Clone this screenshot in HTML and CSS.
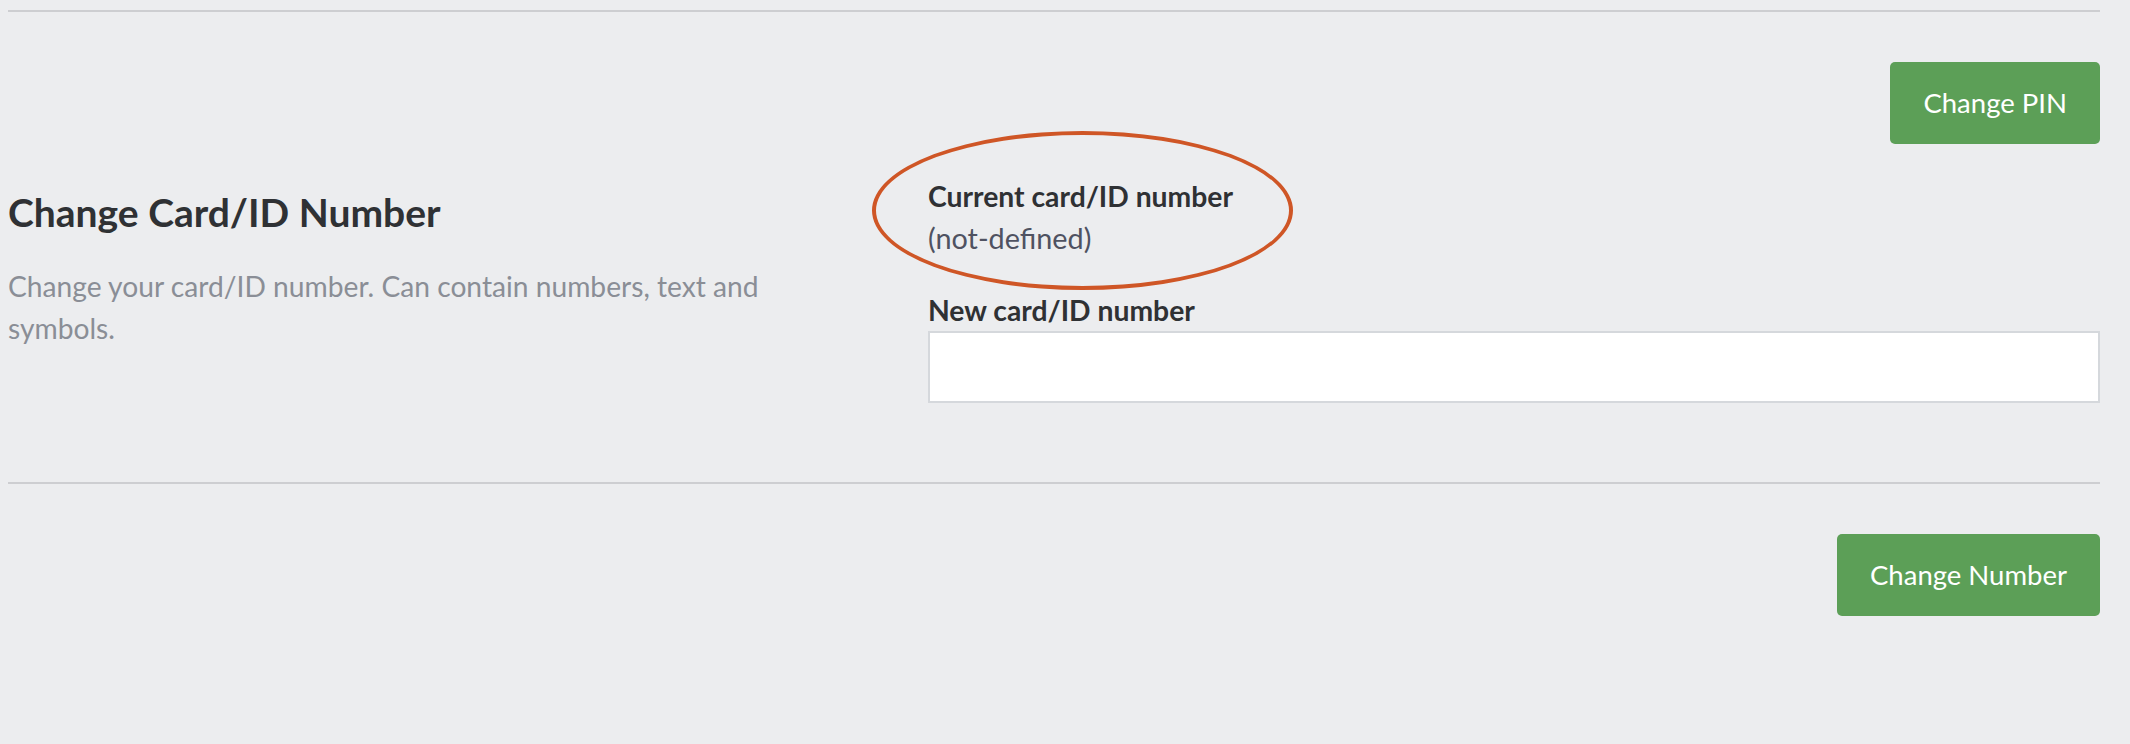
FILE: index.html
```html
<!DOCTYPE html>
<html lang="en">
<head>
<meta charset="utf-8">
<title>Change Card/ID Number</title>
<link rel="stylesheet" href="styles.css">
</head>
<body>
<div class="page">
  <section class="section">
    <div class="actions">
      <button class="btn" type="button">Change PIN</button>
    </div>
    <div class="form-row">
      <div class="intro">
        <h2 class="title">Change Card/ID Number</h2>
        <p class="desc">Change your card/ID number. Can contain numbers, text and symbols.</p>
      </div>
      <div class="fields">
        <div class="current">
          <div class="label">Current card/ID number</div>
          <div class="value">(not-defined)</div>
          <div class="annotation"></div>
        </div>
        <label class="label" for="newnum">New card/ID number</label>
        <input class="input" id="newnum" type="text">
      </div>
    </div>
  </section>
  <section class="section footer">
    <div class="actions">
      <button class="btn" type="button">Change Number</button>
    </div>
  </section>
</div>
</body>
</html>
```

FILE: styles.css
```css
html, body {
  margin: 0;
  padding: 0;
  background: #ecedef;
}
body {
  font-family: Lato, "Open Sans", sans-serif;
  color: #2f3134;
}
.page {
  padding: 10px 30px 0 8px;
  height: 744px;
  box-sizing: border-box;
}
.section {
  border-top: 2px solid #cdced1;
}
.actions {
  display: flex;
  justify-content: flex-end;
  padding-top: 50px;
}
.btn {
  font-family: Lato, "Open Sans", sans-serif;
  font-size: 27.5px;
  line-height: 41px;
  color: #ffffff;
  background: #5c9f57;
  border: none;
  border-radius: 5px;
  padding: 20px 33px 21px;
  cursor: pointer;
}
.form-row {
  display: flex;
  align-items: flex-start;
  padding-bottom: 79px;
}
.intro {
  width: 920px;
  padding-top: 44px;
}
.title {
  margin: 0;
  font-size: 39px;
  line-height: 48px;
  font-weight: 700;
  color: #2f3134;
}
.desc {
  margin: 29px 0 0;
  max-width: 820px;
  font-size: 28.2px;
  line-height: 42px;
  color: #8a8e96;
}
.fields {
  flex: 1;
  display: flex;
  flex-direction: column;
  padding-top: 31px;
}
.current {
  position: relative;
  margin-bottom: 30px;
}
.label {
  display: block;
  font-size: 28.3px;
  line-height: 42px;
  font-weight: 700;
  color: #2f3134;
}
.value {
  font-size: 28.8px;
  line-height: 42px;
  color: #4f5261;
}
.annotation {
  position: absolute;
  left: -56px;
  top: -44px;
  width: 421px;
  height: 159px;
  border: 4px solid #cf5626;
  border-radius: 50%;
  box-sizing: border-box;
  pointer-events: none;
}
.input {
  margin-top: 0;
  height: 72px;
  box-sizing: border-box;
  border: 2px solid #d5d8dc;
  background: #ffffff;
  border-radius: 0;
  font-size: 26px;
  padding: 0 16px;
  outline: none;
}
.footer .actions {
  padding-top: 50px;
}
```
